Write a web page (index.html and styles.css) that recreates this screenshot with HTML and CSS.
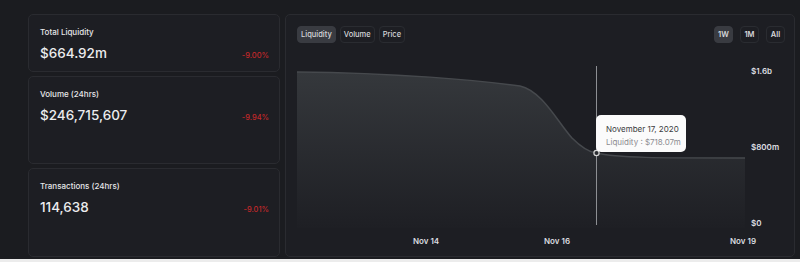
FILE: index.html
```html
<!DOCTYPE html>
<html lang="en">
<head>
  <meta charset="UTF-8" />
  <title>Pool overview</title>
  <link rel="stylesheet" href="styles.css">
</head>
<body>
  <div class="pagina">
    <!-- stats column -->
    <div class="stats">
      <div class="card card-small">
        <div class="label">Total Liquidity</div>
        <div class="fila">
          <span class="valor">$664.92m</span>
          <span class="cambio">-9.00%</span>
        </div>
      </div>
      <div class="card card-big">
        <div class="label">Volume (24hrs)</div>
        <div class="fila">
          <span class="valor">$246,715,607</span>
          <span class="cambio">-9.94%</span>
        </div>
      </div>
      <div class="card card-big2">
        <div class="label">Transactions (24hrs)</div>
        <div class="fila">
          <span class="valor">114,638</span>
          <span class="cambio">-9.01%</span>
        </div>
      </div>
    </div>

    <!-- chart -->
    <div class="card grafico">
      <div class="cabecera">
        <div class="tabs">
          <button class="tab activo">Liquidity</button>
          <button class="tab">Volume</button>
          <button class="tab">Price</button>
        </div>
        <div class="tabs rangos">
          <button class="tab activo">1W</button>
          <button class="tab">1M</button>
          <button class="tab">All</button>
        </div>
      </div>

      <div class="cuerpo">
        <div class="plot">
          <svg width="448" height="162" viewBox="0 0 448 162">
            <defs>
              <linearGradient id="relleno" x1="0" y1="0" x2="0" y2="1">
                <stop offset="0" stop-color="#35383c" />
                <stop offset="1" stop-color="#1e1f24" />
              </linearGradient>
            </defs>
            <path d="M0,6 C100,7 180,14 223,20 C245,25 260,55 275,72 C285,82 292,86 299,87 C320,92 360,92 448,92 L448,162 L0,162 Z" fill="url(#relleno)" />
            <path d="M0,6 C100,7 180,14 223,20 C245,25 260,55 275,72 C285,82 292,86 299,87 C320,92 360,92 448,92" fill="none" stroke="#46494d" stroke-width="1.5" />
            <line x1="299.5" y1="0" x2="299.5" y2="159" stroke="#8d8f93" stroke-width="1" />
            <circle cx="299.5" cy="87" r="2.6" fill="#2a2c30" stroke="#d6d6d6" stroke-width="1.2" />
          </svg>
          <div class="tooltip">
            <div class="tt-fecha">November 17, 2020</div>
            <div class="tt-valor">Liquidity : $718.07m</div>
          </div>
        </div>
        <div class="eje-y">
          <span>$1.6b</span>
          <span>$800m</span>
          <span>$0</span>
        </div>
      </div>

      <div class="eje-x">
        <span style="left: 129px">Nov 14</span>
        <span style="left: 260px">Nov 16</span>
        <span style="left: 446px">Nov 19</span>
      </div>
    </div>
  </div>
</body>
</html>
```

FILE: styles.css
```css
body {
  margin: 0;
  background: #ececec;
  font-family: 'Inter', 'Noto Sans', sans-serif;
}

.pagina {
  height: 259px;
  box-sizing: border-box;
  background: #1b1c20;
  padding: 14px 0 0 28px;
  display: flex;
  gap: 5px;
}

.card {
  background: #1d1e23;
  border: 1px solid #2a2b30;
  border-radius: 5px;
  box-sizing: border-box;
}

.stats {
  width: 252px;
  display: flex;
  flex-direction: column;
  gap: 4px;
}

.stats .card {
  padding: 12px 10px 0 11px;
}

.card-small { height: 58px; }
.card-big { height: 88px; }
.card-big2 { height: 89px; }

.label {
  font-size: 8px;
  line-height: 10px;
  font-weight: 500;
  color: #e6e6e8;
}

.fila {
  display: flex;
  justify-content: space-between;
  align-items: baseline;
  margin-top: 8px;
}

.valor {
  font-size: 13.5px;
  line-height: 17px;
  font-weight: 500;
  color: #ececee;
}

.cambio {
  font-size: 7.5px;
  font-weight: 500;
  color: #c3282a;
}

/* chart */

.grafico {
  width: 510px;
  height: 243px;
  padding: 11px 9px 0 11px;
  position: relative;
}

.cabecera {
  display: flex;
  justify-content: space-between;
}

.tabs {
  display: flex;
  gap: 4px;
}

.rangos {
  gap: 7px;
}

.tab {
  height: 17px;
  padding: 0 3px;
  border: 1px solid #2a2c31;
  border-radius: 4px;
  background: transparent;
  color: #d6d7da;
  font-family: inherit;
  font-size: 7.5px;
  font-weight: 500;
  cursor: pointer;
}

.tab.activo {
  background: #393b41;
  border-color: #393b41;
}

.rangos .tab {
  width: 19px;
  padding: 0;
  font-weight: 600;
}

.cuerpo {
  display: flex;
  margin-top: 23px;
}

.plot {
  position: relative;
  width: 448px;
  height: 162px;
}

.plot svg {
  display: block;
}

.tooltip {
  position: absolute;
  left: 299px;
  top: 49px;
  width: 90px;
  height: 37px;
  box-sizing: border-box;
  background: #fbfbfb;
  border-radius: 5px;
  padding: 8px 0 0 10px;
  font-size: 8px;
  line-height: 13px;
}

.tt-fecha { color: #3a3b40; }
.tt-valor { color: #8b8c90; }

.eje-y {
  display: flex;
  flex-direction: column;
  justify-content: space-between;
  padding-left: 6px;
  height: 162px;
}

.eje-y span,
.eje-x span {
  font-size: 8px;
  line-height: 10px;
  font-weight: 600;
  color: #dcdde0;
}

.eje-x {
  position: relative;
  height: 10px;
  margin-top: 8px;
}

.eje-x span {
  position: absolute;
  top: 0;
  transform: translateX(-50%);
  white-space: nowrap;
}
```
